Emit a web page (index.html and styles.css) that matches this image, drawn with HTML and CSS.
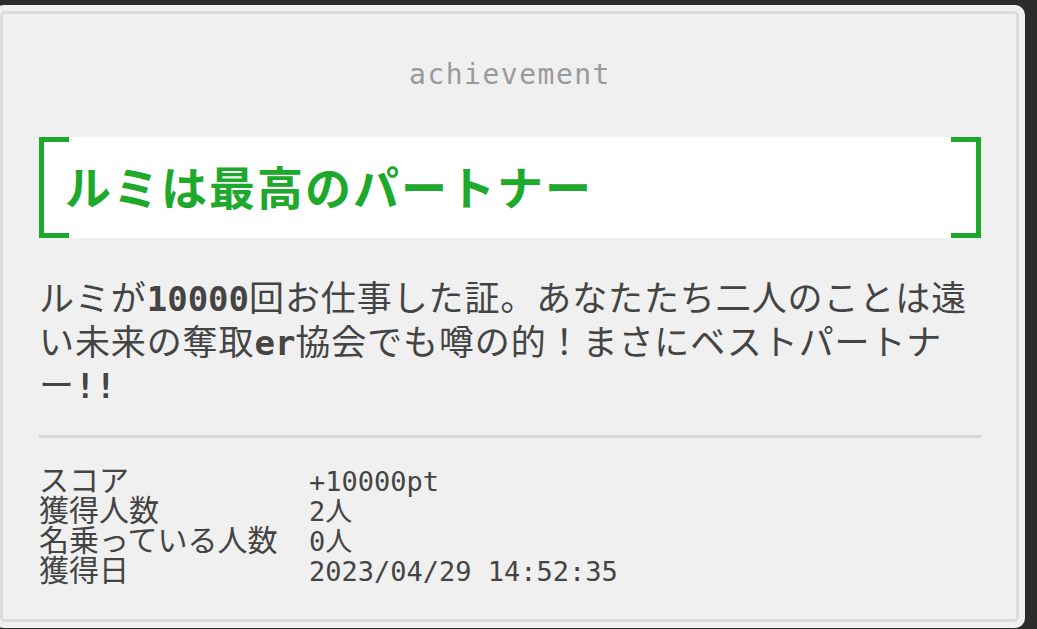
FILE: index.html
```html
<!DOCTYPE html>
<html>
<head>
    <title>achievement</title>
    <link rel="stylesheet" href="styles.css">
</head>
<body>
    <div class="frame">
        <div class="card">
            <div class="category">achievement</div>
            <div class="title-box">
                <h2 class="title">ルミは最高のパートナー</h2>
            </div>
            <p class="description">ルミが<span class="latin">10000</span>回お仕事した証。あなたたち二人のことは遠い未来の奪取<span class="latin">er</span>協会でも噂の的！まさにベストパートナー<span class="latin">!!</span></p>
            <hr class="divider">
            <div class="stats">
                <div class="label">スコア</div>
                <div class="value">+10000pt</div>
                <div class="label">獲得人数</div>
                <div class="value">2人</div>
                <div class="label">名乗っている人数</div>
                <div class="value">0人</div>
                <div class="label">獲得日</div>
                <div class="value">2023/04/29 14:52:35</div>
            </div>
        </div>
    </div>
</body>
</html>
```

FILE: styles.css
```css
body {
    margin: 0;
    background-color: #2c2c2c;
    font-family: "Noto Sans CJK JP", sans-serif;
    color: #444;
    height: 629px;
    overflow: hidden;
}
.frame {
    box-sizing: border-box;
    width: 1031px;
    height: 623px;
    margin: 5px 0 0 -6px;
    padding: 6px;
    background-color: #f0f0f0;
    border-radius: 10px;
}
.card {
    box-sizing: border-box;
    height: 100%;
    border: 3px solid #dcdcdc;
    border-radius: 5px;
    background-color: #f0f0f0;
    padding: 44px 35px 0 36px;
}
.category {
    text-align: center;
    font-family: "DejaVu Sans Mono", monospace;
    font-size: 28px;
    line-height: 34px;
    letter-spacing: 1.5px;
    color: #9a9a9a;
}
.title-box {
    position: relative;
    margin-top: 45px;
    box-sizing: border-box;
    height: 101px;
    background-color: #fff;
    display: flex;
    align-items: center;
    padding: 0 0 6px 26px;
}
.title-box::before,
.title-box::after {
    content: "";
    position: absolute;
    top: 0;
    bottom: 0;
    width: 25px;
    border: 5px solid #1ca82b;
}
.title-box::before {
    left: 0;
    border-right: none;
}
.title-box::after {
    right: 0;
    border-left: none;
}
.title {
    margin: 0;
    font-size: 46px;
    font-weight: bold;
    letter-spacing: 2px;
    color: #1ea82c;
}
.description {
    margin: 36px 0 0 0;
    font-size: 35px;
    line-height: 43.5px;
    letter-spacing: 0.9px;
}
.latin {
    font-family: "DejaVu Sans Mono", monospace;
    font-size: 34px;
    font-weight: bold;
    letter-spacing: 0;
    line-height: 1;
}
.divider {
    margin: 30px 0 0 0;
    border: none;
    height: 3px;
    background-color: #d6d6d6;
}
.stats {
    display: grid;
    grid-template-columns: 270px auto;
    margin-top: 25px;
    font-size: 30px;
    line-height: 30px;
}
.value {
    font-family: "DejaVu Sans Mono", "Noto Sans CJK JP", monospace;
    font-size: 27px;
    line-height: 37px;
    margin-bottom: -7px;
}
```
